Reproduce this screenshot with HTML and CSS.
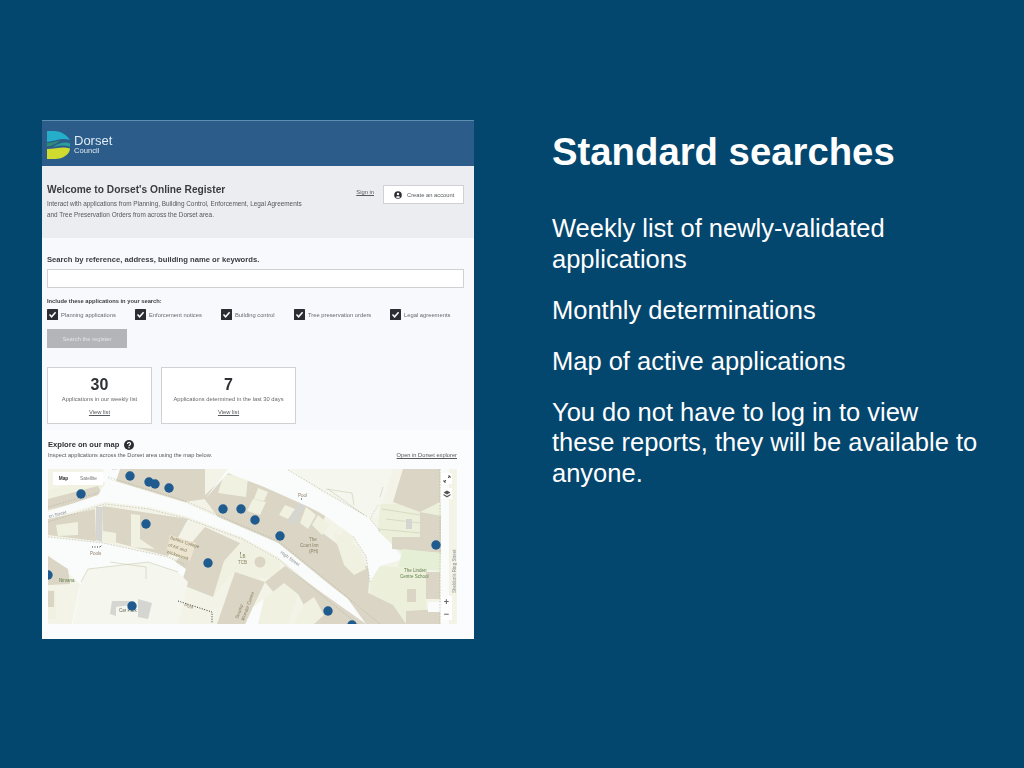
FILE: index.html
```html
<!DOCTYPE html>
<html lang="en">
<head>
<meta charset="utf-8">
<title>Standard searches</title>
<link rel="stylesheet" href="styles.css">
</head>
<body>
<main class="slide">
  <section class="shot">
    <header class="brand">
      <svg class="logo" viewBox="0 0 23 28">
        <path class="l-teal" d="M0 0H7C14 0 20 4 23 9C17 7 12 8 8 9.500L0 11Z"/>
        <path class="l-green" d="M0 12C5 12 8 10.500 13 9.500C9 13 4 15.500 0 15.500Z"/>
        <path class="l-blue" d="M6 16C12 12 18 10.500 23 12.500V16C18 13.500 12 14.500 6 16Z"/>
        <path class="l-yellow" d="M0 18C8 18 16 15 23 17.500C23 23 16 28 8 28H0Z"/>
      </svg>
      <div class="wordmark"><span class="wm-big">Dorset</span><span class="wm-small">Council</span></div>
    </header>
    <section class="intro">
      <div class="intro-copy">
        <h1>Welcome to Dorset's Online Register</h1>
        <p>Interact with applications from Planning, Building Control, Enforcement, Legal Agreements<br>and Tree Preservation Orders from across the Dorset area.</p>
      </div>
      <a class="signin">Sign in</a>
      <a class="create">
        <svg class="acct" viewBox="0 0 8 8"><circle cx="4" cy="4" r="3.800"/><circle class="acct-h" cx="4" cy="3" r="1.200"/><path class="acct-h" d="M1.800 6.200C2.400 4.800 5.600 4.800 6.200 6.200C5 7.200 3 7.200 1.800 6.200Z"/></svg>
        Create an account
      </a>
    </section>
    <section class="search">
      <h2>Search by reference, address, building name or keywords.</h2>
      <div class="input"></div>
      <h3>Include these applications in your search:</h3>
      <div class="checks">
        <label class="check c1"><svg class="box" viewBox="0 0 11 11"><rect width="11" height="11" rx="0.500"/><path d="M2.500 5.500L4.600 7.800L8.600 3.200"/></svg>Planning applications</label>
        <label class="check c2"><svg class="box" viewBox="0 0 11 11"><rect width="11" height="11" rx="0.500"/><path d="M2.500 5.500L4.600 7.800L8.600 3.200"/></svg>Enforcement notices</label>
        <label class="check c3"><svg class="box" viewBox="0 0 11 11"><rect width="11" height="11" rx="0.500"/><path d="M2.500 5.500L4.600 7.800L8.600 3.200"/></svg>Building control</label>
        <label class="check c4"><svg class="box" viewBox="0 0 11 11"><rect width="11" height="11" rx="0.500"/><path d="M2.500 5.500L4.600 7.800L8.600 3.200"/></svg>Tree preservation orders</label>
        <label class="check"><svg class="box" viewBox="0 0 11 11"><rect width="11" height="11" rx="0.500"/><path d="M2.500 5.500L4.600 7.800L8.600 3.200"/></svg>Legal agreements</label>
      </div>
      <div class="btn">Search the register</div>
      <div class="cards">
        <div class="card c-a"><strong>30</strong><span>Applications in our weekly list</span><a>View list</a></div>
        <div class="card c-b"><strong>7</strong><span>Applications determined in the last 30 days</span><a>View list</a></div>
      </div>
    </section>
    <section class="explore">
      <div class="ex-head">
        <div>
          <h2 class="ex-title">Explore on our map <svg class="help" viewBox="0 0 10 10"><circle cx="5" cy="5" r="5"/><path d="M3.500 3.900C3.500 2 6.600 2 6.600 3.800C6.600 5 5 4.800 5 6.200"/><circle class="dot" cx="5" cy="7.700" r="0.700"/></svg></h2>
          <p>Inspect applications across the Dorset area using the map below.</p>
        </div>
        <a class="open">Open in Dorset explorer</a>
      </div>
      <div class="map">
        <svg class="map-art" viewBox="0 0 409 155">
          <rect class="m-base" width="409" height="155"/>
          <!-- north-west -->
          <path class="m-pale" d="M0 22L48 6L58 14L50 22L0 36Z"/>
          <path class="m-bld" d="M0 30L50 17L55 27L0 41Z"/>
          <path class="m-bld" d="M63 0H157V30L137 33L60 10Z"/>
          <path class="m-road" d="M56 0H64L58 14L52 12Z"/>
          <path class="m-road" d="M62 1L72 0L68 12L60 10Z"/>
          <path class="m-bld" d="M155 28L180 4L214 17L247 30L277 47L272 62L322 100L320 127L300 140L277 112L230 74L170 48Z"/>
          <path class="m-pale" d="M176 5L200 8L198 28L170 24Z"/>
          <path class="m-pale" d="M210 19L220 23L216 32L206 30Z"/>
          <path class="m-pale" d="M205 30L218 33L212 46L199 42Z"/>
          <path class="m-pale" d="M237 36L247 40L240 50L231 46Z"/>
          <path class="m-grey" d="M252 33L258 36L246 56L240 53Z"/>
          <path class="m-pale" d="M258 38L268 46L260 60L252 54Z"/>
          <path class="m-pale" d="M270 46L282 56L274 66L264 56Z"/>
          <path class="m-pale" d="M285 62L312 80L318 100L306 106L296 96Z"/>
          <path class="m-pale" d="M296 60L308 68L300 80L290 70Z"/>
          <!-- main road -->
          <path class="m-road" d="M50 26L60 10L137 34L230 74L277 112L332 155H310L277 127L230 88L194 68L137 47L100 38L57 33L0 50V43Z"/>
          <!-- north-east open space -->
          <path class="m-road" d="M157 30L180 0H240L272 22L320 48L356 90L332 97L322 113L318 87L305 67L272 43L214 17L180 4Z"/>
          <!-- south of road -->
          <path class="m-bld" d="M0 50L47 40L48 72L0 66Z"/>
          <path class="m-pale" d="M8 56L30 53L30 66L10 67Z"/>
          <path class="m-grey" d="M48 38L55 38L54 73L48 71Z"/>
          <path class="m-bld" d="M55 37L140 50L120 87L85 78L55 70Z"/>
          <path class="m-pale" d="M83 45L92 46L92 70L107 80L83 78Z"/>
          <path class="m-pale" d="M55 62L68 64L68 75L55 72Z"/>
          <path class="m-bld" d="M157 58L194 75L165 128L137 117L120 112L128 92Z"/>
          <path class="m-label" d="M122 66L148 74L142 92L118 84Z"/>
          <!-- lower west open space -->
          <path class="m-road" d="M0 68L55 74L120 88L138 100L132 118L128 155H24L32 115L0 86Z"/>
          <path class="m-lot" d="M40 100L100 93L130 103L140 113L130 155H25L33 113Z"/>
          <path class="m-outline" d="M62 93L98 98L98 110M40 100L100 93L130 103M33 113L40 100"/>
          <path class="m-bld" d="M0 87L20 100L22 115L0 116Z"/>
          <path class="m-pale" d="M0 120L8 122L8 150L0 150Z"/>
          <path class="m-bld" d="M0 122L6 122L6 138L0 138Z"/>
          <path class="m-grey" d="M64 132L82 132L82 136L68 138L68 147L62 145Z"/>
          <path class="m-grey" d="M90 130L104 134L100 150L90 148Z"/>
          <!-- plaza -->
          <path class="m-pale" d="M194 72L232 92L232 108L200 110L185 103L165 128L176 92Z"/>
          <circle class="m-bld" cx="212" cy="93" r="5.500"/>
          <path class="m-bld" d="M187 103L217 113L197 155H169Z"/>
          <path class="m-bld" d="M217 113L237 97L277 126L318 155H266L250 125L228 126Z"/>
          <path class="m-pale" d="M216 130L236 114L250 125L240 155H206Z"/>
          <path class="m-road" d="M205 138L216 130L210 155H198Z"/>
          <path class="m-pale" d="M256 135L266 128L276 146L266 155H246Z"/>
          <!-- east -->
          <path class="m-lot" d="M240 0H345L330 48L320 48L272 22Z"/>
          <path class="m-outline" d="M278 20L304 24L306 36M280 20L316 46M335 18L332 28"/>
          <path class="m-green" d="M332 35L395 35L395 85L355 85L330 62Z"/>
          <path class="m-bld" d="M355 0H392V33L372 43L345 33Z"/>
          <path class="m-bld" d="M372 43L393 47L393 84L344 80L344 68L372 68Z"/>
          <path class="m-outline" d="M334 40L372 46M330 60L372 64M338 50L372 54"/>
          <path class="m-grey" d="M358 50L364 50L364 60L358 60Z"/>
          <path class="m-mint" d="M355 80L393 84L392 102L350 98Z"/>
          <path class="m-green" d="M332 97L378 100L378 155H345L322 125L322 113Z"/>
          <path class="m-bld" d="M378 103L392 103L392 130L378 130Z"/>
          <path class="m-bld" d="M359 120L368 120L368 133L359 133Z"/>
          <path class="m-bld" d="M300 130L312 120L345 136L358 155H318Z"/>
          <path class="m-bld" d="M358 142L392 140L392 155H358Z"/>
          <path class="m-road" d="M393 0H401V155H393Z"/>
          <path class="m-road" d="M380 133H393V143H380Z"/>
          <path class="m-edge" d="M0 38L50 24M0 53L57 35L100 40L137 49L194 70L230 90L277 129L310 155M60 8L137 32L230 72L277 110L332 155M240 1L320 48M0 68L55 74L120 88L138 96M322 113L318 87L305 67M392 0V155M332 62L322 50L330 36"/>
          <path class="m-dots" d="M44 78H52M52 78L54 76M130 132L164 143L164 154M192 84L194 84M253 30L255 30"/>
          <text class="t-road" transform="translate(1 49) rotate(-14)">en Street</text>
          <text class="t-name" x="42" y="86">Pools</text>
          <text class="t-green" x="11" y="113">Nirvana</text>
          <text class="t-dark" x="71" y="143">Car Park</text>
          <text class="t-name" transform="translate(136 137) rotate(18)">Pool</text>
          <text class="t-name" transform="translate(122 70) rotate(18)">Bettins College</text>
          <text class="t-name" transform="translate(120 77) rotate(18)">of Art and</text>
          <text class="t-name" transform="translate(118 84) rotate(18)">Wickerwork</text>
          <text class="t-name" x="192" y="89">LB</text>
          <text class="t-name" x="190" y="95">TCB</text>
          <text class="t-name" transform="translate(190 150) rotate(-70)">Swamp</text>
          <text class="t-name" transform="translate(196 152) rotate(-70)">Wonder Centre</text>
          <text class="t-name" x="250" y="28">Pool</text>
          <text class="t-name" x="261" y="72">The</text>
          <text class="t-name" x="252" y="78">Court Inn</text>
          <text class="t-name" x="261" y="84">(PH)</text>
          <text class="t-road" transform="translate(232 84) rotate(36)">High Street</text>
          <text class="t-green" x="356" y="103">The Linden</text>
          <text class="t-green" x="352" y="109">Centre School</text>
          <text class="t-road" transform="translate(408 124) rotate(-90)">Sheldon's Ring Street</text>
          <g class="pins">
            <circle cx="82" cy="7" r="4.700"/><circle cx="101" cy="13" r="4.700"/><circle cx="107" cy="15" r="4.700"/><circle cx="121" cy="19" r="4.700"/><circle cx="33" cy="25" r="4.700"/><circle cx="175" cy="40" r="4.700"/><circle cx="193" cy="40" r="4.700"/><circle cx="207" cy="51" r="4.700"/><circle cx="98" cy="55" r="4.700"/><circle cx="232" cy="67" r="4.700"/><circle cx="160" cy="94" r="4.700"/><circle cx="388" cy="76" r="4.700"/><circle cx="84" cy="137" r="4.700"/><circle cx="280" cy="142" r="4.700"/><circle cx="304" cy="156" r="4.700"/><circle cx="0" cy="106" r="4.700"/>
          </g>
        </svg>
        <div class="tabs"><span class="tab on">Map</span><span class="tab">Satellite</span></div>
        <div class="mbtn full"><svg viewBox="0 0 8 8"><path d="M1 7L3 5M5 3L7 1M5 1H7V3M1 5V7H3"/></svg></div>
        <div class="mbtn layers"><svg viewBox="0 0 8 8"><path class="solid" d="M4 .5L7.500 2.500L4 4.500L.5 2.500ZM.5 4L4 6L7.500 4V5.200L4 7.500L.5 5.200Z"/></svg></div>
        <div class="zoom"><span>+</span><span>−</span></div>
      </div>
    </section>
  </section>
  <section class="copy">
    <h1 class="title">Standard searches</h1>
    <p>Weekly list of newly-validated applications</p>
    <p>Monthly determinations</p>
    <p>Map of active applications</p>
    <p>You do not have to log in to view these reports, they will be available to anyone.</p>
  </section>
</main>
</body>
</html>
```
FILE: styles.css
```css
* { box-sizing: border-box; }
html, body { margin: 0; height: 100%; }
body { background: #03466e; font-family: "Liberation Sans", Arial, sans-serif; overflow: hidden; }
.slide { display: flex; width: 1024px; height: 768px; padding: 120px 0 0 42px; }

/* left screenshot */
.shot { width: 432px; height: 519px; flex: none; background: #f7f9fd; color: #3a3c40; overflow: hidden; display: flex; flex-direction: column; filter: blur(.5px); }
.brand { height: 46px; flex: none; display: flex; align-items: center; padding: 2px 0 0 5px; gap: 4px; background: #2c5c8a; border-top: 1px solid #5b8fb0; }
.logo { width: 23px; height: 28px; }
.l-teal { fill: #25aec9; }
.l-green { fill: #2e8f70; }
.l-blue { fill: #2b9f9c; }
.l-yellow { fill: #cfdb2e; }
.wordmark { display: flex; flex-direction: column; color: #dfeaf2; margin-top: 1px; }
.wm-big { font-size: 13px; line-height: 12px; }
.wm-small { font-size: 7.600px; line-height: 8px; }
.intro { height: 72px; flex: none; background: #ecedf0; display: flex; align-items: flex-start; padding: 17px 10px 0 5px; }
.intro-copy { flex: 1; }
.intro h1 { margin: 0 0 2px; font-size: 10.200px; line-height: 14px; font-weight: 700; color: #3a3c40; }
.intro p { margin: 0; font-size: 6.400px; line-height: 10.500px; color: #55585c; }
.signin { font-size: 5.800px; text-decoration: underline; margin: 6px 9px 0 0; color: #55585c; }
.create { width: 81px; height: 19px; margin-top: 2px; background: #fff; border: 1px solid #cfd1d4; font-size: 5.800px; color: #55585c; display: flex; align-items: center; padding-left: 10px; gap: 5px; }
.acct { width: 8px; height: 8px; fill: #2c2e33; }
.acct-h { fill: #fff; }
.search { height: 192px; flex: none; padding: 17px 10px 0 5px; display: flex; flex-direction: column; }
.search h2 { margin: 0; font-size: 7.670px; line-height: 10px; font-weight: 700; color: #3a3c40; }
.input { height: 19px; margin-top: 4px; background: #fff; border: 1px solid #cfd1d4; }
.search h3 { margin: 9px 0 0; font-size: 5.750px; line-height: 8px; font-weight: 700; color: #3a3c40; }
.checks { display: flex; margin-top: 4px; }
.check { display: flex; align-items: center; gap: 3px; font-size: 5.800px; color: #66696d; height: 11px; white-space: nowrap; flex: none; }
.c1 { width: 88px; }
.c2 { width: 86px; }
.c3 { width: 73px; }
.c4 { width: 96px; }
.box { width: 11px; height: 11px; flex: none; fill: #2b2d33; }
.box path { fill: none; stroke: #fff; stroke-width: 1.500; }
.btn { width: 80px; height: 19px; margin-top: 9px; background: #b4b5b8; color: #e2e3e5; font-size: 5.800px; display: flex; align-items: center; justify-content: center; }
.cards { display: flex; gap: 9px; margin-top: 19px; }
.card { height: 57px; background: #fff; border: 1px solid #cfd1d4; display: flex; flex-direction: column; align-items: center; padding-top: 8px; }
.c-a { width: 105px; }
.c-b { width: 135px; }
.card strong { font-size: 16px; line-height: 18px; color: #2f3135; }
.card span { font-size: 5.800px; line-height: 8px; margin-top: 1px; color: #66696d; }
.card a { font-size: 5.800px; line-height: 8px; margin-top: 5px; text-decoration: underline; color: #55585c; }
.explore { flex: 1; background: #fbfcfe; padding: 0 17px 0 6px; display: flex; flex-direction: column; }
.ex-head { display: flex; justify-content: space-between; align-items: flex-start; height: 37px; padding-top: 8px; }
.ex-title { margin: 0; font-size: 7.600px; line-height: 13px; font-weight: 700; color: #2f3135; display: flex; align-items: center; gap: 5px; }
.help { width: 10px; height: 10px; fill: #2b2d33; }
.help path { fill: none; stroke: #fff; stroke-width: 1.200; }
.help .dot { fill: #fff; }
.ex-head p { margin: 0; font-size: 5.700px; line-height: 8px; color: #55585c; }
.open { font-size: 5.700px; line-height: 8px; margin-top: 13px; text-decoration: underline; color: #55585c; }
.map { position: relative; height: 155px; margin-top: 2px; overflow: hidden; }
.map-art { display: block; width: 409px; height: 155px; }
.m-base { fill: #f3f3e7; }
.m-road { fill: #fafcfb; }
.m-pale { fill: #f0f1e0; }
.m-lot { fill: #f5f6ee; }
.m-bld { fill: #dad5c4; }
.m-grey { fill: #d5d6d2; }
.m-label { fill: #ece4ce; }
.m-green { fill: #ecf0da; }
.m-mint { fill: #e5efd6; }
.m-edge { fill: none; stroke: #a7a79a; stroke-width: .5; stroke-dasharray: 1.500 1.500; }
.m-outline { fill: none; stroke: #c9cbb4; stroke-width: .6; }
.m-dots { fill: none; stroke: #333; stroke-width: 1; stroke-dasharray: 1 1.500; }
.map-art text { font-family: "Liberation Sans", Arial, sans-serif; font-size: 4.500px; }
.t-name { fill: #8a7f63; }
.t-dark { fill: #6c6a5e; }
.t-road { fill: #8b8f92; }
.t-green { fill: #5f7d4a; }
.pins circle { fill: #1f5b8e; }
.tabs { position: absolute; left: 5px; top: 3px; display: flex; background: #fff; height: 13px; }
.tab { width: 29px; font-size: 4.800px; line-height: 13px; text-align: center; color: #777; }
.tab.on { font-weight: 700; color: #333; width: 21px; }
.mbtn { position: absolute; right: 5px; width: 11px; height: 11px; background: #fff; display: flex; align-items: center; justify-content: center; }
.mbtn svg { width: 8px; height: 8px; }
.mbtn path { fill: none; stroke: #444; stroke-width: .9; }
.mbtn .solid { fill: #555; stroke: none; }
.full { top: 4px; }
.layers { top: 19px; }
.zoom { position: absolute; right: 5px; bottom: 4px; width: 11px; background: #fff; display: flex; flex-direction: column; align-items: center; font-size: 9px; line-height: 12px; font-weight: 700; color: #666; }

/* right copy */
.copy { width: 430px; margin-left: 78px; padding-top: 10px; color: #fff; }
.title { margin: 0 0 39px; font-size: 38.300px; line-height: 44px; font-weight: 700; }
.copy p { margin: 0 0 20.500px; font-size: 25.500px; line-height: 30.600px; }
```
